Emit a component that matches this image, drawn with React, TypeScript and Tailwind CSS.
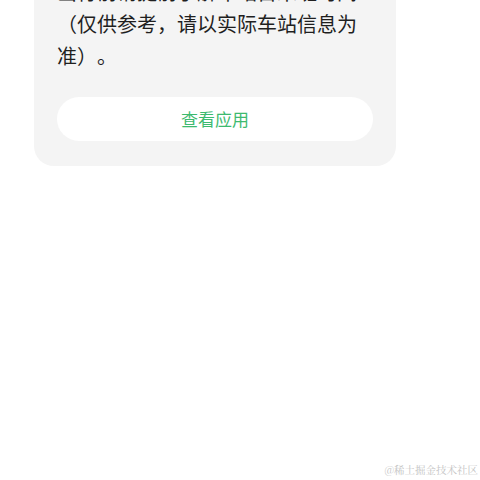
export default function App() {
  return (
    <div className="relative h-[480px] w-[480px] overflow-hidden bg-white font-['Noto_Sans_CJK_SC','Noto_Sans',sans-serif]">
      <div className="ml-[34px] -mt-[24px] w-[362px] rounded-b-[20px] bg-[#f4f4f4] px-[23px] pb-[25px]">
        <div className="flex flex-col text-[20px] leading-[32px] text-[#1f1f1f] [text-spacing-trim:space-all]">
          <span className="whitespace-nowrap">出行前请提前了解车站首末班时间</span>
          <span className="whitespace-nowrap">（仅供参考，请以实际车站信息为</span>
          <span className="whitespace-nowrap">准）。</span>
        </div>
        <button className="mt-[25px] flex h-[44px] w-full items-center justify-center rounded-full bg-white text-[17px] text-[#3dba6f]">
          查看应用
        </button>
      </div>
      <div className="absolute bottom-[5px] right-[2px] text-[10.5px] leading-none text-[#c4c4c4] font-['Noto_Serif_CJK_SC','Noto_Sans_CJK_SC',serif]">
        @稀土掘金技术社区
      </div>
    </div>
  );
}
